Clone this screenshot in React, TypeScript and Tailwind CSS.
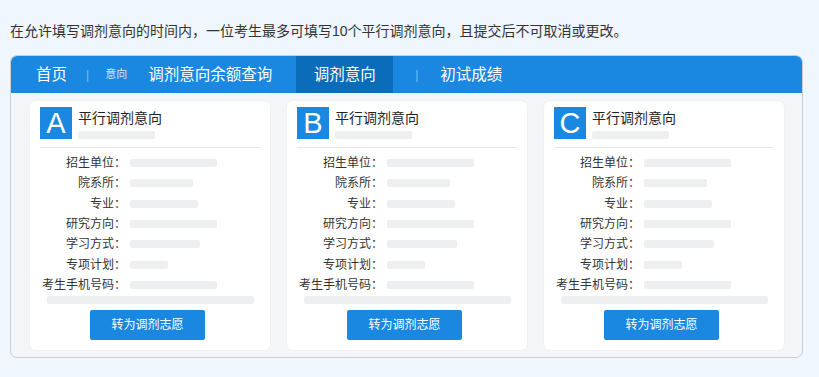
import React from 'react';

const FONT = '"Liberation Sans", "Noto Sans CJK SC", sans-serif';

const rows: { label: string; w: number }[] = [
    { label: '招生单位：', w: 87 },
    { label: '院系所：', w: 63 },
    { label: '专业：', w: 68 },
    { label: '研究方向：', w: 87 },
    { label: '学习方式：', w: 70 },
    { label: '专项计划：', w: 38 },
    { label: '考生手机号码：', w: 87 },
];

const Card: React.FC<{ letter: string }> = ({ letter }) => (
    <div className="w-[240px] bg-white rounded-[6px] pt-[6px] pb-[10px] shadow-[0_0_2px_rgba(0,0,0,0.06)]">
        {/* Card title */}
        <div className="flex items-start px-[10px]">
            <div className="w-[32px] h-[32px] bg-[#1a87e0] text-white flex items-center justify-center text-[29px] leading-none">
                {letter}
            </div>
            <div className="ml-[6px] flex flex-col">
                <span className="text-[14px] leading-[18px] text-[#222] mt-[2px]">平行调剂意向</span>
                <span className="mt-[4px] w-[77px] h-[8px] bg-[#eeeff1] rounded-[2px]"></span>
            </div>
        </div>
        <div className="mx-[10px] mt-[8px] h-px bg-[#e4e7eb]"></div>

        {/* Info rows */}
        <div className="pt-[5px]">
            {rows.map(r => (
                <div key={r.label} className="flex items-center h-[20.33px]">
                    <span className="w-[96px] text-right text-[12px] text-[#333] whitespace-nowrap">{r.label}</span>
                    <span className="ml-[4px] h-[8px] bg-[#eeeff1] rounded-[2px]" style={{ width: r.w }}></span>
                </div>
            ))}
        </div>
        <div className="ml-[17px] mt-[1px] w-[207px] h-[8px] bg-[#eeeff1] rounded-[2px]"></div>

        <div className="flex justify-center mt-[6px] pr-[5px]">
            <button className="w-[115px] h-[30px] bg-[#1a87e0] text-white text-[12px] rounded-[2px]">
                转为调剂志愿
            </button>
        </div>
    </div>
);

const App: React.FC = () => {
    return (
        <div className="w-[819px] h-[377px] bg-[#eff6fd] overflow-hidden" style={{ fontFamily: FONT }}>
            <p className="pt-[21px] pl-[10px] text-[14px] leading-[20px] text-[#333]">
                在允许填写调剂意向的时间内，一位考生最多可填写10个平行调剂意向，且提交后不可取消或更改。
            </p>

            <div className="mt-[14px] ml-[10px] w-[793px] rounded-[7px] border border-[#c9cdd3] bg-[#f3f5f8] overflow-hidden">
                {/* Nav bar */}
                <div className="h-[37px] bg-[#1a87e0] flex items-stretch text-white text-[15.5px]">
                    <span className="ml-[25px] flex items-center">首页</span>
                    <span className="ml-[19px] flex items-center text-[#7fbcef] text-[12px]">|</span>
                    <span className="ml-[16px] flex items-center text-[11px] text-[#cfe5f8]">意向</span>
                    <span className="ml-[21px] flex items-center">调剂意向余额查询</span>
                    <span className="ml-[24px] w-[97px] bg-[#0b6cba] flex items-center justify-center">调剂意向</span>
                    <span className="ml-[22px] flex items-center text-[#7fbcef] text-[12px]">|</span>
                    <span className="ml-[22px] flex items-center">初试成绩</span>
                </div>

                {/* Cards */}
                <div className="flex gap-[17px] pl-[19px] pt-[8px] pb-[7px]">
                    <Card letter="A" />
                    <Card letter="B" />
                    <Card letter="C" />
                </div>
            </div>
        </div>
    );
};

export default App;
